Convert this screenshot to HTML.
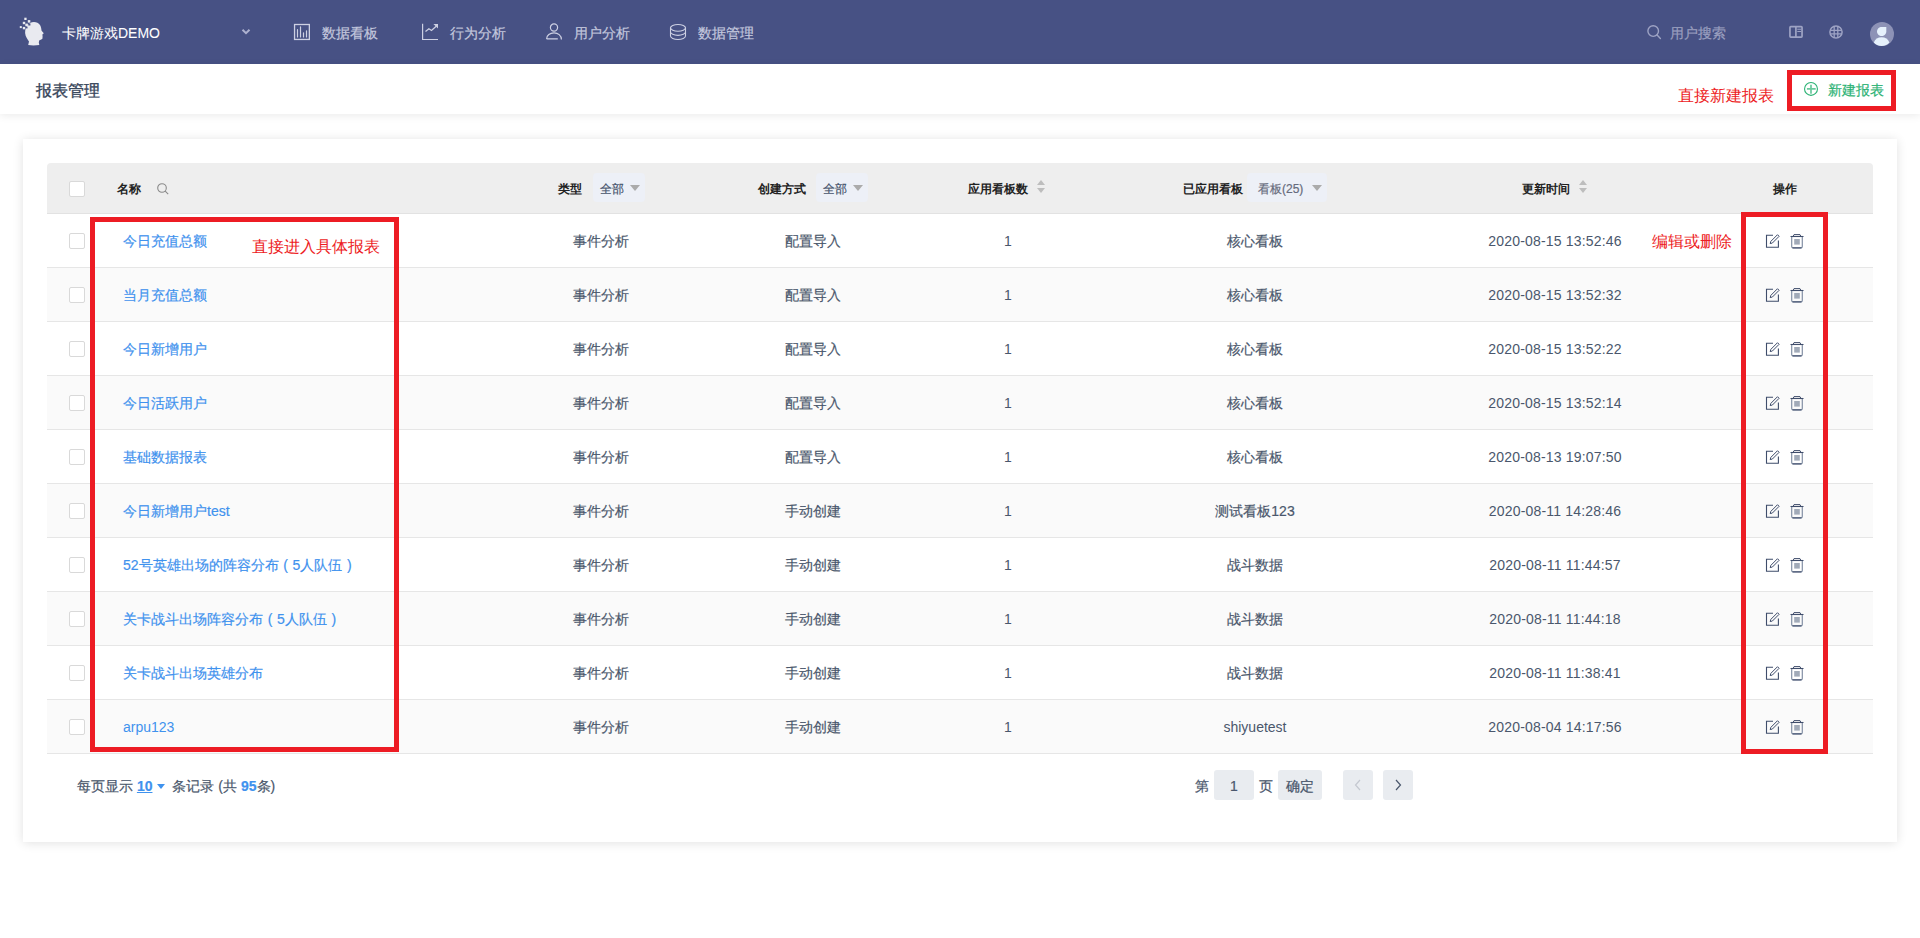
<!DOCTYPE html><html><head><meta charset="utf-8"><title>报表管理</title><style>
*{box-sizing:border-box;margin:0;padding:0}
html,body{width:1920px;height:938px;overflow:hidden;background:#fff;font-family:"Liberation Sans",sans-serif}
.a{position:absolute;white-space:nowrap}
.td,.nm,.pt,.nt,.st{-webkit-text-stroke:0.2px currentColor}
#nav{position:absolute;left:0;top:0;width:1920px;height:64px;background:#475184}
.nt{position:absolute;top:24px;font-size:14px;line-height:18px;color:#c3c7dd}
#hd{position:absolute;left:0;top:64px;width:1920px;height:50px;background:#fff;box-shadow:0 2px 8px rgba(0,0,0,.08)}
#card{position:absolute;left:23px;top:139px;width:1874px;height:703px;background:#fff;box-shadow:0 1px 10px rgba(0,0,0,.12)}
#th{position:absolute;left:47px;top:163px;width:1826px;height:51px;background:#eeeeee;border-bottom:1px solid #e2e2e2;border-radius:4px 4px 0 0}
.row{position:absolute;left:47px;width:1826px;height:54px;border-bottom:1px solid #e6e6e6}
.cb{position:absolute;left:22px;width:16px;height:16px;border:1px solid #d9d9d9;border-radius:2px;background:#fff}
.hc{position:absolute;top:19px;font-size:12px;line-height:14px;font-weight:bold;color:#222}
.sel{position:absolute;top:10px;height:29px;background:#edf0f7;border-radius:4px}
.st{position:absolute;top:9px;font-size:12px;line-height:14px;color:#45526b}
.tri{position:absolute;width:0;height:0;border-left:5px solid transparent;border-right:5px solid transparent;border-top:6px solid #ababab}
.td{position:absolute;top:19px;font-size:14px;line-height:16px;color:#4a576c;text-align:center;width:300px}
.nm{position:absolute;left:76px;top:19px;font-size:14px;line-height:16px;color:#3f92ee}
.redbox{position:absolute;border:5px solid #ed1c24}
.ann{position:absolute;font-size:16px;line-height:18px;color:#ed1c24}
.pg{position:absolute;top:770px;height:30px;background:#e9ecf0;border-radius:3px}
.fp{display:inline-block;width:14px;text-align:center}
.dt{letter-spacing:0.18px;-webkit-text-stroke:0}
.lt{-webkit-text-stroke:0}
.pt{position:absolute;font-size:14px;line-height:16px;color:#4a576c}
</style></head><body>
<div id="nav">
<svg class="a" style="left:15px;top:14px" width="35" height="35" viewBox="0 0 35 35">
<path fill="#e9eaf0" d="M13.2 31 L14 27.5 C13 25.5 10.3 23 10.1 19 C9.9 15 11.5 11 15 9 C18.5 7.2 23 8 25 11 C26.2 13 26.3 15 26.6 16.8 L28.8 19.2 L27.4 20.4 L27.6 22.6 L27.4 24.8 C26.5 25.6 25.2 25.8 24.2 26.4 L23.8 28.5 L24.3 31 C21 31.5 16.5 31.6 13.2 31 Z"/>
<rect fill="#475184" x="13.3" y="9.4" width="2.1" height="2.1"/>
<rect fill="#475184" x="10.6" y="12.5" width="1.9" height="1.9"/>
<rect fill="#e9eaf0" x="9.3" y="3.7" width="2.3" height="2.3"/>
<rect fill="#e9eaf0" x="12.8" y="6.1" width="2.5" height="2.5"/>
<rect fill="#e9eaf0" x="7.8" y="7.8" width="2.4" height="2.4"/>
<rect fill="#e9eaf0" x="10.3" y="9.6" width="2.6" height="2.6"/>
<rect fill="#e9eaf0" x="4.8" y="12.1" width="2" height="2"/>
<rect fill="#e9eaf0" x="7.8" y="12.9" width="2.4" height="2.4"/>
</svg>
<div class="nt" style="left:62px;color:#fff;-webkit-text-stroke:0.05px #fff">卡牌游戏DEMO</div>
<svg class="a" style="left:241px;top:28px" width="10" height="8" viewBox="0 0 10 8"><path d="M1.5 1.8 L5 5.2 L8.5 1.8" fill="none" stroke="#adb1cf" stroke-width="2"/></svg>
<svg class="a" style="left:292px;top:22px" width="20" height="20" viewBox="0 0 20 20" fill="none" stroke="#cdd0e3" stroke-width="1.3"><rect x="2.55" y="2.5" width="14.8" height="14.95"/><path d="M5.5 7.7V15M8.5 4.9V15M11.5 10.8V15M14.5 8.9V15" stroke-width="1.2" stroke-linecap="round"/></svg>
<div class="nt" style="left:322px">数据看板</div>
<svg class="a" style="left:420px;top:22px" width="20" height="20" viewBox="0 0 20 20" fill="none" stroke="#cdd0e3" stroke-width="1.2"><path d="M2.6 1.8V17.5H18"/><path d="M5.5 9.5L8.9 6.7L11.5 8.5L16.2 4.3" stroke-width="1.3"/><path d="M13.4 2.1H18V6.45Z" fill="#cdd0e3" stroke="none"/></svg>
<div class="nt" style="left:450px">行为分析</div>
<svg class="a" style="left:545px;top:23px" width="18" height="18" viewBox="0 0 18 18" fill="none" stroke="#cdd0e3" stroke-width="1.2"><circle cx="9" cy="4.55" r="3.6"/><path d="M1.6 15.9C1.6 12.3 5 9.9 9 9.9C13 9.9 16.4 12.3 16.4 16.4M1.6 15.9H12.8"/></svg>
<div class="nt" style="left:574px">用户分析</div>
<svg class="a" style="left:669px;top:23px" width="18" height="18" viewBox="0 0 18 18" fill="none" stroke="#cdd0e3" stroke-width="1.1"><ellipse cx="9" cy="4.87" rx="7.5" ry="3.4"/><path d="M1.5 4.87V13.05M16.5 4.87V13.05"/><path d="M1.5 8.96A7.5 3.4 0 0 0 16.5 8.96M1.5 13.05A7.5 3.4 0 0 0 16.5 13.05"/></svg>
<div class="nt" style="left:698px">数据管理</div>
<svg class="a" style="left:1644px;top:22px" width="20" height="20" viewBox="0 0 20 20" fill="none" stroke="#9ea3c4" stroke-width="1.4"><circle cx="9.2" cy="9.05" r="5.3"/><path d="M13.1 13L16.4 16.4" stroke-linecap="round"/></svg>
<div class="nt" style="left:1670px;color:#9a9fbf">用户搜索</div>
<svg class="a" style="left:1788px;top:24px" width="16" height="16" viewBox="0 0 16 16" fill="none" stroke="#9ea3c4" stroke-width="1.7"><rect x="1.95" y="2.65" width="12.1" height="10.5" rx="0.8"/><path d="M7.9 2.6V13.2"/><path d="M9.3 5.2H13.3M9.3 7.5H13.3" stroke-width="1.1"/></svg>
<svg class="a" style="left:1828px;top:24px" width="16" height="16" viewBox="0 0 16 16" fill="none" stroke="#9ea3c4" stroke-width="1.5"><circle cx="8" cy="8" r="6.1"/><path d="M2.5 6.3H13.5M2.5 9.9H13.5M6.2 2.2V13.8M9.8 2.2V13.8" stroke-width="1.3"/></svg>
<svg class="a" style="left:1870px;top:22px" width="24" height="24" viewBox="0 0 24 24"><circle cx="12" cy="12" r="12" fill="#8d92b6"/><path d="M7 9.5C7 6.9 9.1 4.9 11.6 4.9H16.3V9.5C16.3 12 14.2 14 11.65 14C9.1 14 7 12 7 9.5Z" fill="#e6f1fc"/><path d="M3.8 20.5C5 17.2 8 15.3 11.6 15.3C15.2 15.3 18.2 17.2 19.4 20.5C17.5 22.8 15 24 11.6 24C8.2 24 5.7 22.8 3.8 20.5Z" fill="#e6f1fc"/></svg>
</div>
<div id="hd"></div>
<div class="a tt" style="left:36px;top:82px;font-size:16px;line-height:18px;color:#364459;-webkit-text-stroke:0.35px #364459">报表管理</div>
<div class="ann" style="left:1678px;top:87px">直接新建报表</div>
<div class="redbox" style="left:1787px;top:70px;width:109px;height:41px"></div>
<svg class="a" style="left:1802px;top:80px" width="18" height="18" viewBox="0 0 18 18" fill="none" stroke="#2bb274" stroke-width="1.1"><circle cx="9" cy="8.9" r="6.45"/><path d="M9 4.85V13.65M4.9 8.9H13.7" stroke-width="1.7" opacity=".7"/></svg>
<div class="a" style="left:1828px;top:82px;font-size:14px;line-height:16px;color:#2bb274;-webkit-text-stroke:0.2px #2bb274">新建报表</div>
<div id="card"></div>
<div id="th">
<div class="cb" style="top:18px"></div>
<div class="hc" style="left:70px">名称</div>
<svg class="a" style="left:110px;top:20px" width="12" height="12" viewBox="0 0 12 12" fill="none" stroke="#8a8a8a" stroke-width="1.1"><circle cx="5" cy="5" r="4.3"/><path d="M8.2 8.2L11.2 11.2"/></svg>
<div class="hc" style="left:511px">类型</div>
<div class="sel" style="left:546px;width:52px"><div class="st" style="left:7px;color:#45526b">全部</div><div class="tri" style="left:37px;top:12px"></div></div>
<div class="hc" style="left:711px">创建方式</div>
<div class="sel" style="left:769px;width:52px"><div class="st" style="left:7px;color:#45526b">全部</div><div class="tri" style="left:37px;top:12px"></div></div>
<div class="hc" style="left:921px">应用看板数</div>
<div class="a" style="left:990px;top:17px;width:0;height:0;border-left:4px solid transparent;border-right:4px solid transparent;border-bottom:5px solid #bdbdbd"></div><div class="a" style="left:990px;top:25px;width:0;height:0;border-left:4px solid transparent;border-right:4px solid transparent;border-top:5px solid #bdbdbd"></div>
<div class="hc" style="left:1136px">已应用看板</div>
<div class="sel" style="left:1200px;width:80px"><div class="st" style="left:11px;color:#666b7c">看板(25)</div><div class="tri" style="left:65px;top:12px"></div></div>
<div class="hc" style="left:1475px">更新时间</div>
<div class="a" style="left:1532px;top:17px;width:0;height:0;border-left:4px solid transparent;border-right:4px solid transparent;border-bottom:5px solid #bdbdbd"></div><div class="a" style="left:1532px;top:25px;width:0;height:0;border-left:4px solid transparent;border-right:4px solid transparent;border-top:5px solid #bdbdbd"></div>
<div class="hc" style="left:1726px">操作</div>
</div>
<div class="row" style="top:214px;background:#fff">
<div class="cb" style="top:19px"></div>
<div class="nm">今日充值总额</div>
<div class="td" style="left:404px">事件分析</div>
<div class="td" style="left:616px">配置导入</div>
<div class="td lt" style="left:811px">1</div>
<div class="td" style="left:1058px">核心看板</div>
<div class="td dt" style="left:1358px">2020-08-15 13:52:46</div>
<svg class="a" style="left:1718px;top:20px" width="15" height="15" viewBox="0 0 15 15" fill="none" stroke="#3f4d6b" stroke-width="1.1"><path d="M8 1.3H1.5V13.3H13.4V6.5"/><path d="M5.2 9.6L5.8 7.4L12.5 0.7L14.1 2.3L7.4 9Z" stroke-width="1"/></svg><svg class="a" style="left:1743px;top:20px" width="15" height="15" viewBox="0 0 15 15"><path d="M3.2 2.3L4 0.6H10L10.8 2.3" fill="none" stroke="#3f4d6b" stroke-width="1"/><path d="M0.5 2.5H13.5" stroke="#3f4d6b" stroke-width="1.1"/><path d="M1.7 3V12.5C1.7 13.4 2.3 13.9 3.1 13.9H10.9C11.7 13.9 12.3 13.4 12.3 12.5V3" fill="none" stroke="#8390a5" stroke-width="1.2"/><path d="M2.5 13.9H11.5" stroke="#3f4d6b" stroke-width="1.1"/><rect x="4.2" y="5" width="5.6" height="5.6" fill="#a1aab8"/></svg>
</div>
<div class="row" style="top:268px;background:#fafafa">
<div class="cb" style="top:19px"></div>
<div class="nm">当月充值总额</div>
<div class="td" style="left:404px">事件分析</div>
<div class="td" style="left:616px">配置导入</div>
<div class="td lt" style="left:811px">1</div>
<div class="td" style="left:1058px">核心看板</div>
<div class="td dt" style="left:1358px">2020-08-15 13:52:32</div>
<svg class="a" style="left:1718px;top:20px" width="15" height="15" viewBox="0 0 15 15" fill="none" stroke="#3f4d6b" stroke-width="1.1"><path d="M8 1.3H1.5V13.3H13.4V6.5"/><path d="M5.2 9.6L5.8 7.4L12.5 0.7L14.1 2.3L7.4 9Z" stroke-width="1"/></svg><svg class="a" style="left:1743px;top:20px" width="15" height="15" viewBox="0 0 15 15"><path d="M3.2 2.3L4 0.6H10L10.8 2.3" fill="none" stroke="#3f4d6b" stroke-width="1"/><path d="M0.5 2.5H13.5" stroke="#3f4d6b" stroke-width="1.1"/><path d="M1.7 3V12.5C1.7 13.4 2.3 13.9 3.1 13.9H10.9C11.7 13.9 12.3 13.4 12.3 12.5V3" fill="none" stroke="#8390a5" stroke-width="1.2"/><path d="M2.5 13.9H11.5" stroke="#3f4d6b" stroke-width="1.1"/><rect x="4.2" y="5" width="5.6" height="5.6" fill="#a1aab8"/></svg>
</div>
<div class="row" style="top:322px;background:#fff">
<div class="cb" style="top:19px"></div>
<div class="nm">今日新增用户</div>
<div class="td" style="left:404px">事件分析</div>
<div class="td" style="left:616px">配置导入</div>
<div class="td lt" style="left:811px">1</div>
<div class="td" style="left:1058px">核心看板</div>
<div class="td dt" style="left:1358px">2020-08-15 13:52:22</div>
<svg class="a" style="left:1718px;top:20px" width="15" height="15" viewBox="0 0 15 15" fill="none" stroke="#3f4d6b" stroke-width="1.1"><path d="M8 1.3H1.5V13.3H13.4V6.5"/><path d="M5.2 9.6L5.8 7.4L12.5 0.7L14.1 2.3L7.4 9Z" stroke-width="1"/></svg><svg class="a" style="left:1743px;top:20px" width="15" height="15" viewBox="0 0 15 15"><path d="M3.2 2.3L4 0.6H10L10.8 2.3" fill="none" stroke="#3f4d6b" stroke-width="1"/><path d="M0.5 2.5H13.5" stroke="#3f4d6b" stroke-width="1.1"/><path d="M1.7 3V12.5C1.7 13.4 2.3 13.9 3.1 13.9H10.9C11.7 13.9 12.3 13.4 12.3 12.5V3" fill="none" stroke="#8390a5" stroke-width="1.2"/><path d="M2.5 13.9H11.5" stroke="#3f4d6b" stroke-width="1.1"/><rect x="4.2" y="5" width="5.6" height="5.6" fill="#a1aab8"/></svg>
</div>
<div class="row" style="top:376px;background:#fafafa">
<div class="cb" style="top:19px"></div>
<div class="nm">今日活跃用户</div>
<div class="td" style="left:404px">事件分析</div>
<div class="td" style="left:616px">配置导入</div>
<div class="td lt" style="left:811px">1</div>
<div class="td" style="left:1058px">核心看板</div>
<div class="td dt" style="left:1358px">2020-08-15 13:52:14</div>
<svg class="a" style="left:1718px;top:20px" width="15" height="15" viewBox="0 0 15 15" fill="none" stroke="#3f4d6b" stroke-width="1.1"><path d="M8 1.3H1.5V13.3H13.4V6.5"/><path d="M5.2 9.6L5.8 7.4L12.5 0.7L14.1 2.3L7.4 9Z" stroke-width="1"/></svg><svg class="a" style="left:1743px;top:20px" width="15" height="15" viewBox="0 0 15 15"><path d="M3.2 2.3L4 0.6H10L10.8 2.3" fill="none" stroke="#3f4d6b" stroke-width="1"/><path d="M0.5 2.5H13.5" stroke="#3f4d6b" stroke-width="1.1"/><path d="M1.7 3V12.5C1.7 13.4 2.3 13.9 3.1 13.9H10.9C11.7 13.9 12.3 13.4 12.3 12.5V3" fill="none" stroke="#8390a5" stroke-width="1.2"/><path d="M2.5 13.9H11.5" stroke="#3f4d6b" stroke-width="1.1"/><rect x="4.2" y="5" width="5.6" height="5.6" fill="#a1aab8"/></svg>
</div>
<div class="row" style="top:430px;background:#fff">
<div class="cb" style="top:19px"></div>
<div class="nm">基础数据报表</div>
<div class="td" style="left:404px">事件分析</div>
<div class="td" style="left:616px">配置导入</div>
<div class="td lt" style="left:811px">1</div>
<div class="td" style="left:1058px">核心看板</div>
<div class="td dt" style="left:1358px">2020-08-13 19:07:50</div>
<svg class="a" style="left:1718px;top:20px" width="15" height="15" viewBox="0 0 15 15" fill="none" stroke="#3f4d6b" stroke-width="1.1"><path d="M8 1.3H1.5V13.3H13.4V6.5"/><path d="M5.2 9.6L5.8 7.4L12.5 0.7L14.1 2.3L7.4 9Z" stroke-width="1"/></svg><svg class="a" style="left:1743px;top:20px" width="15" height="15" viewBox="0 0 15 15"><path d="M3.2 2.3L4 0.6H10L10.8 2.3" fill="none" stroke="#3f4d6b" stroke-width="1"/><path d="M0.5 2.5H13.5" stroke="#3f4d6b" stroke-width="1.1"/><path d="M1.7 3V12.5C1.7 13.4 2.3 13.9 3.1 13.9H10.9C11.7 13.9 12.3 13.4 12.3 12.5V3" fill="none" stroke="#8390a5" stroke-width="1.2"/><path d="M2.5 13.9H11.5" stroke="#3f4d6b" stroke-width="1.1"/><rect x="4.2" y="5" width="5.6" height="5.6" fill="#a1aab8"/></svg>
</div>
<div class="row" style="top:484px;background:#fafafa">
<div class="cb" style="top:19px"></div>
<div class="nm">今日新增用户test</div>
<div class="td" style="left:404px">事件分析</div>
<div class="td" style="left:616px">手动创建</div>
<div class="td lt" style="left:811px">1</div>
<div class="td" style="left:1058px">测试看板123</div>
<div class="td dt" style="left:1358px">2020-08-11 14:28:46</div>
<svg class="a" style="left:1718px;top:20px" width="15" height="15" viewBox="0 0 15 15" fill="none" stroke="#3f4d6b" stroke-width="1.1"><path d="M8 1.3H1.5V13.3H13.4V6.5"/><path d="M5.2 9.6L5.8 7.4L12.5 0.7L14.1 2.3L7.4 9Z" stroke-width="1"/></svg><svg class="a" style="left:1743px;top:20px" width="15" height="15" viewBox="0 0 15 15"><path d="M3.2 2.3L4 0.6H10L10.8 2.3" fill="none" stroke="#3f4d6b" stroke-width="1"/><path d="M0.5 2.5H13.5" stroke="#3f4d6b" stroke-width="1.1"/><path d="M1.7 3V12.5C1.7 13.4 2.3 13.9 3.1 13.9H10.9C11.7 13.9 12.3 13.4 12.3 12.5V3" fill="none" stroke="#8390a5" stroke-width="1.2"/><path d="M2.5 13.9H11.5" stroke="#3f4d6b" stroke-width="1.1"/><rect x="4.2" y="5" width="5.6" height="5.6" fill="#a1aab8"/></svg>
</div>
<div class="row" style="top:538px;background:#fff">
<div class="cb" style="top:19px"></div>
<div class="nm">52号英雄出场的阵容分布<span class="fp">(</span>5人队伍<span class="fp">)</span></div>
<div class="td" style="left:404px">事件分析</div>
<div class="td" style="left:616px">手动创建</div>
<div class="td lt" style="left:811px">1</div>
<div class="td" style="left:1058px">战斗数据</div>
<div class="td dt" style="left:1358px">2020-08-11 11:44:57</div>
<svg class="a" style="left:1718px;top:20px" width="15" height="15" viewBox="0 0 15 15" fill="none" stroke="#3f4d6b" stroke-width="1.1"><path d="M8 1.3H1.5V13.3H13.4V6.5"/><path d="M5.2 9.6L5.8 7.4L12.5 0.7L14.1 2.3L7.4 9Z" stroke-width="1"/></svg><svg class="a" style="left:1743px;top:20px" width="15" height="15" viewBox="0 0 15 15"><path d="M3.2 2.3L4 0.6H10L10.8 2.3" fill="none" stroke="#3f4d6b" stroke-width="1"/><path d="M0.5 2.5H13.5" stroke="#3f4d6b" stroke-width="1.1"/><path d="M1.7 3V12.5C1.7 13.4 2.3 13.9 3.1 13.9H10.9C11.7 13.9 12.3 13.4 12.3 12.5V3" fill="none" stroke="#8390a5" stroke-width="1.2"/><path d="M2.5 13.9H11.5" stroke="#3f4d6b" stroke-width="1.1"/><rect x="4.2" y="5" width="5.6" height="5.6" fill="#a1aab8"/></svg>
</div>
<div class="row" style="top:592px;background:#fafafa">
<div class="cb" style="top:19px"></div>
<div class="nm">关卡战斗出场阵容分布<span class="fp">(</span>5人队伍<span class="fp">)</span></div>
<div class="td" style="left:404px">事件分析</div>
<div class="td" style="left:616px">手动创建</div>
<div class="td lt" style="left:811px">1</div>
<div class="td" style="left:1058px">战斗数据</div>
<div class="td dt" style="left:1358px">2020-08-11 11:44:18</div>
<svg class="a" style="left:1718px;top:20px" width="15" height="15" viewBox="0 0 15 15" fill="none" stroke="#3f4d6b" stroke-width="1.1"><path d="M8 1.3H1.5V13.3H13.4V6.5"/><path d="M5.2 9.6L5.8 7.4L12.5 0.7L14.1 2.3L7.4 9Z" stroke-width="1"/></svg><svg class="a" style="left:1743px;top:20px" width="15" height="15" viewBox="0 0 15 15"><path d="M3.2 2.3L4 0.6H10L10.8 2.3" fill="none" stroke="#3f4d6b" stroke-width="1"/><path d="M0.5 2.5H13.5" stroke="#3f4d6b" stroke-width="1.1"/><path d="M1.7 3V12.5C1.7 13.4 2.3 13.9 3.1 13.9H10.9C11.7 13.9 12.3 13.4 12.3 12.5V3" fill="none" stroke="#8390a5" stroke-width="1.2"/><path d="M2.5 13.9H11.5" stroke="#3f4d6b" stroke-width="1.1"/><rect x="4.2" y="5" width="5.6" height="5.6" fill="#a1aab8"/></svg>
</div>
<div class="row" style="top:646px;background:#fff">
<div class="cb" style="top:19px"></div>
<div class="nm">关卡战斗出场英雄分布</div>
<div class="td" style="left:404px">事件分析</div>
<div class="td" style="left:616px">手动创建</div>
<div class="td lt" style="left:811px">1</div>
<div class="td" style="left:1058px">战斗数据</div>
<div class="td dt" style="left:1358px">2020-08-11 11:38:41</div>
<svg class="a" style="left:1718px;top:20px" width="15" height="15" viewBox="0 0 15 15" fill="none" stroke="#3f4d6b" stroke-width="1.1"><path d="M8 1.3H1.5V13.3H13.4V6.5"/><path d="M5.2 9.6L5.8 7.4L12.5 0.7L14.1 2.3L7.4 9Z" stroke-width="1"/></svg><svg class="a" style="left:1743px;top:20px" width="15" height="15" viewBox="0 0 15 15"><path d="M3.2 2.3L4 0.6H10L10.8 2.3" fill="none" stroke="#3f4d6b" stroke-width="1"/><path d="M0.5 2.5H13.5" stroke="#3f4d6b" stroke-width="1.1"/><path d="M1.7 3V12.5C1.7 13.4 2.3 13.9 3.1 13.9H10.9C11.7 13.9 12.3 13.4 12.3 12.5V3" fill="none" stroke="#8390a5" stroke-width="1.2"/><path d="M2.5 13.9H11.5" stroke="#3f4d6b" stroke-width="1.1"/><rect x="4.2" y="5" width="5.6" height="5.6" fill="#a1aab8"/></svg>
</div>
<div class="row" style="top:700px;background:#fafafa">
<div class="cb" style="top:19px"></div>
<div class="nm lt">arpu123</div>
<div class="td" style="left:404px">事件分析</div>
<div class="td" style="left:616px">手动创建</div>
<div class="td lt" style="left:811px">1</div>
<div class="td lt" style="left:1058px">shiyuetest</div>
<div class="td dt" style="left:1358px">2020-08-04 14:17:56</div>
<svg class="a" style="left:1718px;top:20px" width="15" height="15" viewBox="0 0 15 15" fill="none" stroke="#3f4d6b" stroke-width="1.1"><path d="M8 1.3H1.5V13.3H13.4V6.5"/><path d="M5.2 9.6L5.8 7.4L12.5 0.7L14.1 2.3L7.4 9Z" stroke-width="1"/></svg><svg class="a" style="left:1743px;top:20px" width="15" height="15" viewBox="0 0 15 15"><path d="M3.2 2.3L4 0.6H10L10.8 2.3" fill="none" stroke="#3f4d6b" stroke-width="1"/><path d="M0.5 2.5H13.5" stroke="#3f4d6b" stroke-width="1.1"/><path d="M1.7 3V12.5C1.7 13.4 2.3 13.9 3.1 13.9H10.9C11.7 13.9 12.3 13.4 12.3 12.5V3" fill="none" stroke="#8390a5" stroke-width="1.2"/><path d="M2.5 13.9H11.5" stroke="#3f4d6b" stroke-width="1.1"/><rect x="4.2" y="5" width="5.6" height="5.6" fill="#a1aab8"/></svg>
</div>
<div class="redbox" style="left:90px;top:217px;width:309px;height:535px"></div>
<div class="ann" style="left:252px;top:238px">直接进入具体报表</div>
<div class="redbox" style="left:1741px;top:212px;width:87px;height:542px"></div>
<div class="ann" style="left:1652px;top:233px">编辑或删除</div>
<div class="pt" style="left:77px;top:778px">每页显示 <b style="color:#3f92ee;text-decoration:underline">10</b><span style="display:inline-block;width:0;height:0;border-left:4px solid transparent;border-right:4px solid transparent;border-top:5px solid #3f92ee;margin:0 7px 2px 5px;vertical-align:middle"></span>条记录 (共 <b style="color:#3f92ee">95</b>条)</div>
<div class="pt" style="left:1195px;top:778px">第</div>
<div class="pg" style="left:1214px;width:40px"><div class="pt" style="left:0;width:40px;text-align:center;top:8px">1</div></div>
<div class="pt" style="left:1259px;top:778px">页</div>
<div class="pg" style="left:1278px;width:44px"><div class="pt" style="left:8px;top:8px">确定</div></div>
<div class="pg" style="left:1343px;width:30px"><svg class="a" style="left:10px;top:9px" width="10" height="12" viewBox="0 0 10 12" fill="none" stroke="#c4c8d0" stroke-width="1.2"><path d="M7 1L2.5 6L7 11"/></svg></div>
<div class="pg" style="left:1383px;width:30px"><svg class="a" style="left:10px;top:9px" width="10" height="12" viewBox="0 0 10 12" fill="none" stroke="#4a576c" stroke-width="1.2"><path d="M3 1L7.5 6L3 11"/></svg></div>
</body></html>
